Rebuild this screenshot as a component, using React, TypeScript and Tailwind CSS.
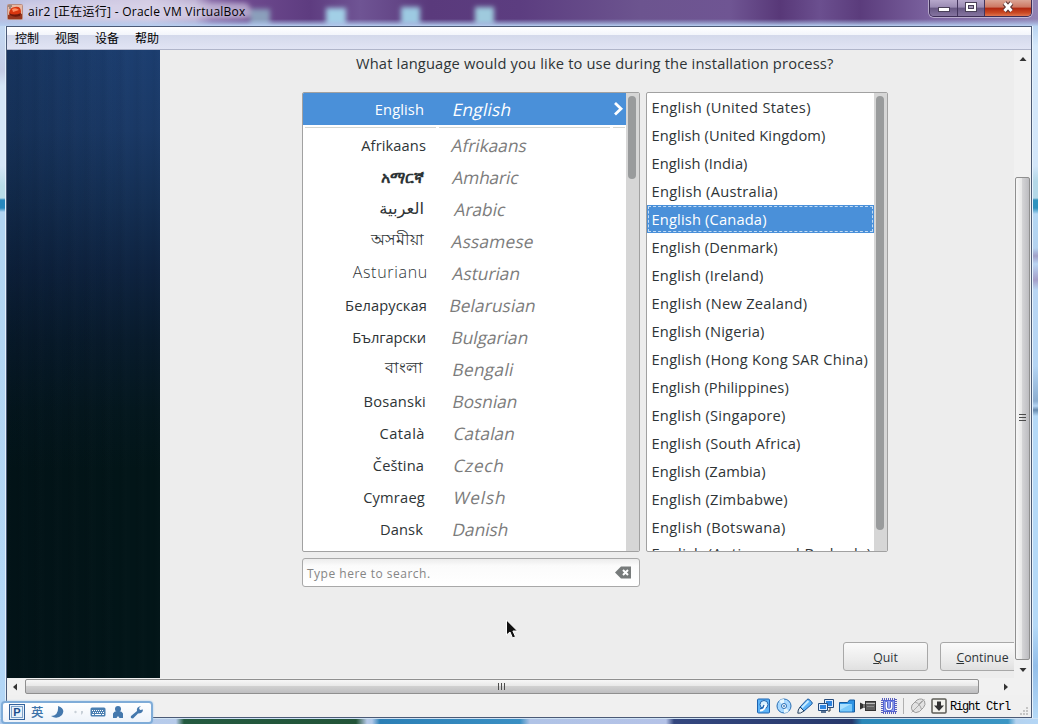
import React from "react";

const languages = [
  { native: "Afrikaans", name: "Afrikaans", a: "pr-[12px] tracking-[0.1px]", b: "ml-[14px]" },
  { native: "አማርኛ", name: "Amharic", a: "pr-[14px] font-semibold text-[15.8px]", b: "ml-[15px] tracking-[-0.15px]" },
  { native: "العربية", name: "Arabic", a: "pr-[14px] pb-[2px] text-[16.4px]", b: "ml-[17px]" },
  { native: "অসমীয়া", name: "Assamese", a: "pr-[14px] pb-[5px] text-[16.2px]", b: "ml-[14px] tracking-[0.2px]" },
  { native: "Asturianu", name: "Asturian", a: "pr-[10px] pb-[3px] font-light text-[16px] tracking-[0.7px]", b: "ml-[15px]" },
  { native: "Беларуская", name: "Belarusian", a: "pr-[11px] tracking-[0.1px]", b: "ml-[12px] tracking-[0.1px]" },
  { native: "Български", name: "Bulgarian", a: "pr-[12px] tracking-[-0.1px]", b: "ml-[14px]" },
  { native: "বাংলা", name: "Bengali", a: "pr-[15px] pb-[5px] text-[16.2px]", b: "ml-[15px] tracking-[0.3px]" },
  { native: "Bosanski", name: "Bosnian", a: "pr-[12px] tracking-[0.2px]", b: "ml-[15px]" },
  { native: "Català", name: "Catalan", a: "pr-[13px] tracking-[0.5px]", b: "ml-[16px] tracking-[0.1px]" },
  { native: "Čeština", name: "Czech", a: "pr-[14px] tracking-[0.1px]", b: "ml-[16px] tracking-[0.7px]" },
  { native: "Cymraeg", name: "Welsh", a: "pr-[13px] tracking-[0.2px]", b: "ml-[16px] tracking-[0.8px]" },
  { native: "Dansk", name: "Danish", a: "pr-[15px] tracking-[0.1px]", b: "ml-[15px]" },
];

const regions = [
  { name: "United States", t: "tracking-[0.3px]" },
  { name: "United Kingdom", t: "tracking-[0.1px]" },
  { name: "India", t: "tracking-[0.08px]" },
  { name: "Australia", t: "tracking-[0.28px]" },
  { name: "Canada", t: "tracking-[0.16px]" },
  { name: "Denmark", t: "tracking-[0.12px]" },
  { name: "Ireland", t: "tracking-[0.18px]" },
  { name: "New Zealand", t: "tracking-[0.28px]" },
  { name: "Nigeria", t: "tracking-[0.2px]" },
  { name: "Hong Kong SAR China", t: "tracking-[0.26px]" },
  { name: "Philippines", t: "tracking-[0.08px]" },
  { name: "Singapore", t: "tracking-[0.22px]" },
  { name: "South Africa", t: "tracking-[0.24px]" },
  { name: "Zambia", t: "tracking-[0.14px]" },
  { name: "Zimbabwe", t: "tracking-[0.22px]" },
  { name: "Botswana", t: "tracking-[0.34px]" },
  { name: "Antigua and Barbuda", t: "tracking-[0.5px] -mt-[3px]" },
];

function TitleBar() {
  return (
    <div className="relative flex h-[26px] shrink-0 items-start justify-between overflow-hidden bg-[linear-gradient(90deg,#b9bfe0_0px,#c9c6e2_60px,#d3cbe3_150px,#bdb0d2_195px,#8769a6_212px,#6f4b90_240px,#5e3c80_310px,#6f5494_360px,#5a3a7c_430px,#5c3d80_520px,#6c548f_640px,#6f5593_730px,#583878_780px,#6b4f8f_820px,#5b3c7c_860px,#7b629f_930px,#9283b4_1038px)]">
      <svg className="absolute inset-0" width="1038" height="26">
        <defs>
          <filter id="glow" x="-50%" y="-50%" width="200%" height="200%"><feGaussianBlur stdDeviation="2.5" /></filter>
          <linearGradient id="edge" x1="0" y1="0" x2="0" y2="1">
            <stop offset="0" stopColor="#a9c4ea" stopOpacity="0" />
            <stop offset="1" stopColor="#b7cff0" />
          </linearGradient>
        </defs>
        <g filter="url(#glow)">
          <rect x="20" y="3" width="230" height="16" rx="6" fill="#d9d4ea" opacity=".65" />
          <rect x="250" y="9" width="20" height="18" fill="#8b9fbb" />
          <rect x="326" y="8" width="20" height="18" fill="#a2cfe6" />
          <rect x="401" y="7" width="19" height="18" fill="#9dcae2" />
          <rect x="475" y="7" width="19" height="18" fill="#9fcadd" />
        </g>
        <rect y="19" width="1038" height="7" fill="url(#edge)" />
      </svg>
      <div className="relative flex h-[24px] items-center pl-[7px]">
        <svg width="16" height="16" viewBox="0 0 16 16">
          <rect x=".5" y=".5" width="15" height="15" rx="1" fill="#e8b9a4" stroke="#b98c80" />
          <path d="M1 11 Q8 7 15 10 V15 H1Z" fill="#98371f" />
          <path d="M2 9 Q3 3 8 3 Q14 2 14 8 Q14 12 9 12 Q4 12 2 9Z" fill="#d9360f" />
          <path d="M5 5 Q9 3 12 6 L6 8Z" fill="#ff8e63" />
          <path d="M2 9 Q7 12 14 9 L13 12 Q7 14 3 11Z" fill="#6d1a0c" />
          <path d="M1 2h4M2 4h2" stroke="#555" />
        </svg>
        <span className="ml-[5px] whitespace-pre font-['Open_Sans','Noto_Sans_CJK_SC',sans-serif] text-[12px] leading-[16px] tracking-[0.26px] text-black">air2 [正在运行] - Oracle VM VirtualBox</span>
      </div>
      <div className="relative mr-[6px] flex h-[17px] overflow-hidden rounded-b-[5px] border border-t-0 border-[#3c2d55] shadow-[0_0_0_1px_rgba(255,255,255,0.45)]">
        <div className="flex w-[28px] items-center justify-center border-r border-[#43355d] bg-[linear-gradient(#b6a8cb_0%,#9a8bb3_45%,#675883_50%,#8574a0_100%)]">
          <svg width="14" height="12"><path d="M1 5h12v5H1z" fill="#4a4058" /><path d="M2 6h10v3H2z" fill="#fff" /></svg>
        </div>
        <div className="flex w-[27px] items-center justify-center border-r border-[#43355d] bg-[linear-gradient(#b6a8cb_0%,#9a8bb3_45%,#675883_50%,#8574a0_100%)]">
          <svg className="-mt-[2px]" width="14" height="12"><path d="M1 1h12v10H1z" fill="#4a4058" /><path d="M2 2h10v8H2z" fill="#fff" /><path d="M4 4h6v4H4z" fill="#4a4058" /><path d="M5 5h4v2H5z" fill="#a59bb8" /></svg>
        </div>
        <div className="flex w-[46px] items-center justify-center bg-[linear-gradient(#dba595_0%,#cd7762_45%,#b0260f_50%,#cb4a24_80%,#df7450_100%)]">
          <svg className="-mt-[2px]" width="14" height="12">
            <path d="M3.500 2l7 8M10.500 2l-7 8" fill="none" stroke="#5b3434" strokeWidth="5" />
            <path d="M3.500 2l7 8M10.500 2l-7 8" fill="none" stroke="#fff" strokeWidth="3" />
          </svg>
        </div>
      </div>
    </div>
  );
}

function LanguageList() {
  return (
    <div className="flex h-[460px] w-[338px] overflow-hidden rounded-[2px] border border-[#a1a1a1] bg-white">
      <div className="flex w-[323px] flex-col">
        <div className="flex h-[32px] shrink-0 items-center bg-[#4a90d9] text-white">
          <div className="w-[135px] pr-[14px] pb-[1px] text-right text-[14.67px] tracking-[0.1px]">English</div>
          <div className="flex-1 pt-[2px]"><span className="ml-[15px] inline-block -skew-x-12 text-[17.3px] font-medium tracking-[0.2px]">English</span></div>
          <svg className="mr-[1px]" width="14" height="18" viewBox="0 0 14 18"><path d="M4 3l6 5.700-6 5.700" fill="none" stroke="#fff" strokeWidth="2.800" /></svg>
        </div>
        <div className="mt-[2px] mb-[1px] flex h-px shrink-0 gap-[3px] pr-[1px] pl-[2px]">
          <div className="w-[131px] bg-[#d4d6d2]" />
          <div className="flex-1 bg-[#d4d6d2]" />
          <div className="w-[12px] bg-[#d4d6d2]" />
        </div>
        {languages.map((l) => (
          <div key={l.name} className="flex h-[32px] shrink-0 items-center">
            <div className={`w-[135px] shrink-0 text-right text-[14.67px] leading-[22px] whitespace-nowrap text-[#2e3436] ${l.a}`}>{l.native}</div>
            <div className={`-skew-x-12 pt-[2px] text-[17.3px] whitespace-nowrap text-[#7c7c7c] ${l.b}`}>{l.name}</div>
          </div>
        ))}
      </div>
      <div className="flex-1 bg-[#d6d6d6] pt-[3px] pl-[2px]">
        <div className="h-[83px] w-[8px] rounded-full bg-[#999b9c]" />
      </div>
    </div>
  );
}

function RegionList() {
  return (
    <div className="flex h-[460px] w-[242px] overflow-hidden rounded-[2px] border border-[#a1a1a1] bg-white">
      <div className="flex w-[227px] flex-col">
        {regions.map((r) => (
          <div
            key={r.name}
            className={
              r.name === "Canada"
                ? "h-[28px] shrink-0 bg-[#4a90d9] p-[1px] text-white"
                : "h-[28px] shrink-0 p-[1px] text-[#2e3436]"
            }
          >
            <div
              className={
                r.name === "Canada"
                  ? "flex h-[26px] items-center border border-dashed border-[#c3dcf5] pb-[1px] pl-[2.500px]"
                  : "flex h-[26px] items-center border border-transparent pb-[1px] pl-[2.500px]"
              }
            >
              <span className={`text-[14.67px] whitespace-nowrap ${r.t}`}>English ({r.name})</span>
            </div>
          </div>
        ))}
      </div>
      <div className="flex-1 bg-[#d6d6d6] pt-[3px] pl-[2px]">
        <div className="h-[434px] w-[8px] rounded-full bg-[#999b9c]" />
      </div>
    </div>
  );
}

function Installer() {
  return (
    <div className="flex min-w-0 flex-1 flex-col overflow-hidden bg-[#ededed] font-['Open_Sans','Noto_Sans','DejaVu_Sans',sans-serif]">
      <div className="mt-[3px] ml-[196px] h-[20px] text-[14.67px] leading-[20px] tracking-[0.165px] whitespace-nowrap text-[#2e3436]">
        What language would you like to use during the installation process?
      </div>
      <div className="mt-[19px] ml-[142px] flex gap-[6px]">
        <LanguageList />
        <RegionList />
      </div>
      <div className="mt-[6px] ml-[142px] flex h-[29px] w-[338px] shrink-0 items-center justify-between rounded-[3px] border border-[#a8a8a8] bg-[linear-gradient(#ececec,#fbfbfb_25%,#ffffff)] pr-[7px] pl-[4px]">
        <span className="pt-[2px] text-[12px] tracking-[0.5px] text-[#858585]">Type here to search.</span>
        <svg width="17" height="13" viewBox="0 0 17 13">
          <path d="M0 6.500L6 .5h10v12H6z" fill="#777b7b" />
          <path d="M8 4l5 5M13 4l-5 5" stroke="#fff" strokeWidth="2" />
        </svg>
      </div>
      <div className="mt-[55px] ml-[683px] flex h-[29px] shrink-0 gap-[12px] text-[12.3px] text-[#2e3436]">
        <div className="flex w-[85px] shrink-0 items-center justify-center rounded-[3px] border border-[#a8a8a8] bg-[linear-gradient(#fafafa,#ececec_60%,#e0e0e0)] pt-[4px]">
          <span><span className="underline">Q</span>uit</span>
        </div>
        <div className="flex w-[85px] shrink-0 items-center justify-center rounded-[3px] border border-[#a8a8a8] bg-[linear-gradient(#fafafa,#ececec_60%,#e0e0e0)] pt-[4px]">
          <span><span className="underline">C</span>ontinue</span>
        </div>
      </div>
    </div>
  );
}

function StatusBar() {
  return (
    <div className="flex h-[22px] shrink-0 items-center justify-end bg-[#f0f0f0] pr-[2px]">
      <div className="flex items-center gap-[5px]">
        <svg width="16" height="16" viewBox="0 0 16 16">
          <rect x="2.500" y="1" width="12" height="14" rx="1" fill="#5db4f8" stroke="#1c62b0" />
          <ellipse cx="9" cy="6.500" rx="4" ry="4" fill="#d9f1ff" stroke="#1f63ad" />
          <path d="M5 12.500q5 0 5.500-6" fill="none" stroke="#fff" strokeWidth="2" />
          <path d="M5 10.500q3 .5 4-3.500" fill="none" stroke="#1f63ad" strokeWidth="1.200" />
        </svg>
        <svg width="16" height="16" viewBox="0 0 16 16">
          <circle cx="8" cy="8" r="7" fill="#a9d9ff" stroke="#286eb4" />
          <path d="M8 8L3 3a7 7 0 0 1 5-2zM8 8l5 5a7 7 0 0 1-5 2z" fill="#e6f7ff" />
          <circle cx="8" cy="8" r="2.500" fill="#fff" stroke="#286eb4" />
          <circle cx="8" cy="8" r="1" fill="#4085c4" />
        </svg>
        <svg width="16" height="16" viewBox="0 0 16 16">
          <path d="M3 9l7-7.500q1-1 2.200 0l2.600 2.500q1 1.200 0 2.200l-8 7z" fill="#5cb3f8" stroke="#1c579b" />
          <path d="M5 9.500l6.500-6.500" stroke="#c9ecff" strokeWidth="1.800" />
          <path d="M3 9l4 4-3.500 2-2.700.2.500-3.200z" fill="#e8f1f8" stroke="#28415f" />
        </svg>
        <svg width="16" height="16" viewBox="0 0 16 16">
          <path d="M6.500 1.500h9v8h-9z" fill="#dcecff" stroke="#264a79" />
          <path d="M8 3h6v5H8z" fill="#2f84df" />
          <path d="M12 10v3h-2" fill="none" stroke="#333" />
          <path d="M.5 5.500h9v7h-9z" fill="#dcecff" stroke="#264a79" />
          <path d="M2 7h6v4H2z" fill="#2f84df" />
          <path d="M3 14h5" stroke="#264a79" strokeWidth="1.500" />
        </svg>
        <svg width="16" height="16" viewBox="0 0 16 16">
          <path d="M.5 14V4.500h8l2-2.500h5v12z" fill="#2e93e3" stroke="#145b9e" />
          <path d="M1 6h12v7.500H1z" fill="#79c9fa" />
          <path d="M1 6h11L1 12z" fill="#a9e0ff" />
        </svg>
        <svg width="16" height="16" viewBox="0 0 16 16">
          <path d="M0 4.500l3 1.500v4l-3 1.500z" fill="#333" />
          <rect x="3" y="6" width="2" height="4" fill="#777" />
          <rect x="5.500" y="3.500" width="10" height="9" fill="#5f5f5f" stroke="#333" />
          <path d="M6 5.500h9" stroke="#bbb" /><path d="M7 8.500h7" stroke="#8a8a8a" />
        </svg>
        <svg width="16" height="16" viewBox="0 0 16 16">
          <rect x="1" y="1" width="14" height="14" fill="none" stroke="#5a60bd" strokeWidth="2" strokeDasharray="1 1" />
          <rect x="2" y="2" width="12" height="12" fill="#5264d4" />
          <rect x="3" y="3" width="10" height="10" fill="#93a3f5" />
          <path d="M5.300 3.500v5.500q0 2.500 2.700 2.500t2.700-2.500V3.500" fill="none" stroke="#4050b8" strokeWidth="3" />
          <path d="M5.300 4v5q0 2.500 2.700 2.500t2.700-2.500V4" fill="none" stroke="#fff" strokeWidth="1.500" />
        </svg>
      </div>
      <div className="ml-[6px] h-[16px] w-px bg-[#b0b0b0]" />
      <svg className="ml-[6px]" width="16" height="16" viewBox="0 0 16 16">
        <path d="M2 7l5-5q5-2.500 7.500 1 1.500 3.500-1 6.500l-4 4q-4 2.500-7-.5-2-2.500-.5-6z" fill="#e2e2e2" stroke="#9b9b9b" />
        <path d="M5 4q5 1.500 6.500 7.500M8.500 6.500l4-4" fill="none" stroke="#a5a5a5" />
        <path d="M1.500 14.500L14.500 1.500" stroke="#aaa" />
      </svg>
      <svg className="ml-[5px]" width="16" height="16" viewBox="0 0 16 16">
        <rect x="1" y="1" width="14" height="14" rx="1" fill="#f3f3ed" stroke="#5c5c56" strokeWidth="1.500" />
        <path d="M6 3.500h4v4h3L8 13 3 7.500h3z" fill="#333" />
      </svg>
      <span className="ml-[3px] w-[61px] pt-[1px] font-['Liberation_Mono',monospace] text-[12px] leading-[16px] tracking-[-1.2px] whitespace-pre text-black">Right Ctrl</span>
      <svg className="ml-[7px] self-end" width="11" height="12">
        <path d="M8 2h2v2H8zM5 5h2v2H5zM8 5h2v2H8zM2 8h2v2H2zM5 8h2v2H5zM8 8h2v2H8z" fill="#c5c5c5" />
      </svg>
    </div>
  );
}

function InputMethodBar() {
  return (
    <div className="absolute top-[701px] left-[1px] flex h-[23px] w-[152px] items-center rounded-[4px] border-2 border-[#7facd8] bg-[linear-gradient(#ffffff,#eef3fa)] pb-[1px] pl-[6px] shadow-[0_0_2px_#9ac4ea]">
      <div className="flex size-[16px] items-center justify-center border border-[#34629b] bg-[#e8f1fa] outline-1 -outline-offset-3 outline-[#7fa3ca]">
        <span className="font-['Liberation_Sans',sans-serif] text-[11px] leading-[12px] font-bold text-[#1d4f8c]">P</span>
      </div>
      <span className="ml-[6px] font-['Noto_Sans_CJK_SC',sans-serif] text-[12.5px] leading-[16px] font-medium text-[#3d73a9]">英</span>
      <svg className="ml-[6px]" width="15" height="14" viewBox="0 0 15 14"><path d="M8 1q8 3 4 9-5 5-11 1 8 0 7-10z" fill="#4478ad" /></svg>
      <svg className="ml-[8px]" width="12" height="14" viewBox="0 0 12 14"><circle cx="2.500" cy="7" r="1.200" fill="#c8d0d8" /><path d="M8 6h2v2l-2 2z" fill="#c8d0d8" /></svg>
      <svg className="ml-[5px]" width="16" height="12" viewBox="0 0 16 12">
        <rect x=".5" y="1.500" width="15" height="9" rx="1.500" fill="#4b7fb1" />
        <path d="M2 4.500h11M3 6.500h11" stroke="#fff" strokeDasharray="1 1" />
        <path d="M2 8.500h2m1 0h6m1 0h2" stroke="#fff" />
      </svg>
      <svg className="ml-[6px]" width="12" height="14" viewBox="0 0 12 14"><circle cx="6" cy="4" r="3" fill="#4478ad" /><path d="M1 13V8.500Q2 6 5 6h2q3 0 4 2.500V13H7.500L6 11 4.500 13z" fill="#4478ad" /></svg>
      <svg className="ml-[6px]" width="14" height="14" viewBox="0 0 14 14"><path d="M1 11l6-5q-1-4 4-5L9 3l1 2 3-.5q0 4-5 4l-5 5q-3 0-2-2.500z" fill="#4478ad" /></svg>
    </div>
  );
}

export default function App() {
  return (
    <div className="relative flex h-[724px] w-[1038px] flex-col overflow-hidden bg-[#b9d7f5]">
      <TitleBar />
      <div className="flex h-[692px] shrink-0">
        <div className="w-[6px] shrink-0 border-r border-[#e3f0fc] bg-[linear-gradient(#c3d9f3_0px,#c5cde6_45px,#d5e6f7_60px,#d5e6f7_140px,#b9dce8_160px,#b9dce8_172px,#2787bd_174px,#2787bd_182px,#b2d5f2_186px,#b3d6f6_692px)]" />
        <div className="flex h-[692px] w-[1026px] flex-col border border-[#4b5a76]">
          <div className="flex h-[23px] shrink-0 items-center gap-[16px] border-b border-[#b0b5ca] bg-[linear-gradient(#ffffff_0%,#f3f5fb_35%,#d4d9eb_38%,#e1e4f4_100%)] pb-[1px] pl-[8px] font-['Noto_Sans_CJK_SC',sans-serif] text-[12px] leading-[16px] text-black">
            <span>控制</span>
            <span>视图</span>
            <span>设备</span>
            <span>帮助</span>
          </div>
          <div className="flex h-[628px] shrink-0">
            <div className="w-[153px] shrink-0 bg-[linear-gradient(90deg,rgba(0,10,20,0.2),rgba(0,10,20,0)_80%),repeating-linear-gradient(90deg,rgba(255,255,255,0.008)_0px,rgba(255,255,255,0)_6px,rgba(0,0,0,0.03)_11px,rgba(255,255,255,0.008)_17px),linear-gradient(#1c3e70_0px,#1a3966_80px,#142f54_150px,#0e2340_220px,#081b2c_290px,#04171e_360px,#021518_420px,#021518_628px)]" />
            <Installer />
            <div className="flex w-[17px] shrink-0 flex-col items-center bg-[#f1f1f1] pr-[1px]">
              <svg className="mt-[6px] ml-[2px]" width="8" height="6"><path d="M4 1l3.500 4h-7z" fill="#333" /></svg>
              <div className="mt-[115px] flex h-[483px] w-[15px] items-center justify-center rounded-[2px] border border-[#8f8f8f] bg-[linear-gradient(90deg,#f7f7f7,#e8e8e8_45%,#d3d3d5_50%,#bcbcc0)]">
                <svg className="mb-[2px]" width="7" height="9"><path d="M0 1.500h7M0 4.500h7M0 7.500h7" stroke="#4c4c4c" /></svg>
              </div>
              <svg className="mt-[7px] ml-[2px]" width="8" height="6"><path d="M4 5L.5 1h7z" fill="#333" /></svg>
            </div>
          </div>
          <div className="flex h-[17px] shrink-0 items-center bg-[#f1f1f1]">
            <svg className="ml-[5px]" width="6" height="8"><path d="M1 4l4-3.500v7z" fill="#333" /></svg>
            <div className="ml-[7px] flex h-[15px] w-[954px] items-center justify-center rounded-[2px] border border-[#8f8f8f] bg-[linear-gradient(#f7f7f7,#e8e8e8_45%,#d0d0d0_50%,#bebec0)] pr-[2px]">
              <svg width="9" height="7"><path d="M1.500 0v7M4.500 0v7M7.500 0v7" stroke="#4c4c4c" /></svg>
            </div>
            <svg className="ml-[24px]" width="6" height="8"><path d="M5 4L1 .5v7z" fill="#333" /></svg>
          </div>
          <StatusBar />
        </div>
        <div className="w-[6px] shrink-0 border-l border-[#e9f4fd] bg-[linear-gradient(#b9d3f0_0px,#d5e8fa_20px,#d3e6fa_140px,#b4d8e8_155px,#b4d8e8_172px,#2f92be_174px,#2f92be_182px,#b4d7f3_188px,#b4d2ef_222px,#a2a0c8_230px,#b9d5f3_238px,#a59fc9_254px,#b9d5f3_264px,#b5d5f4_340px,#8daed0_375px,#b5d5f4_380px,#6689ad_384px,#b5d9f7_390px,#b5d9f7_600px,#94bee9_640px,#b5d9f7_692px)]" />
      </div>
      <div className="h-[6px] shrink-0 border-t border-[#cfe2f4] bg-[linear-gradient(90deg,#b3cdf0_0px,#b7cbea_176px,#245a40_184px,#225438_356px,#b6c9e8_367px,#b1c9e9_372px,#2b7fb5_380px,#3a8fc3_520px,#b0c3e6_530px,#b4c2e7_666px,#34477f_674px,#27386b_852px,#2b88b8_862px,#3c96c4_1008px,#b4d2ef_1016px,#b4d6f5_1038px)]" />
      <svg className="absolute top-[619px] left-[505px]" width="16" height="22" viewBox="0 0 16 22">
        <path d="M1.500 1v15l3.500-3 2.500 6 3-1.300-2.600-5.700h4.600z" fill="#111" stroke="#fff" />
      </svg>
      <InputMethodBar />
    </div>
  );
}
